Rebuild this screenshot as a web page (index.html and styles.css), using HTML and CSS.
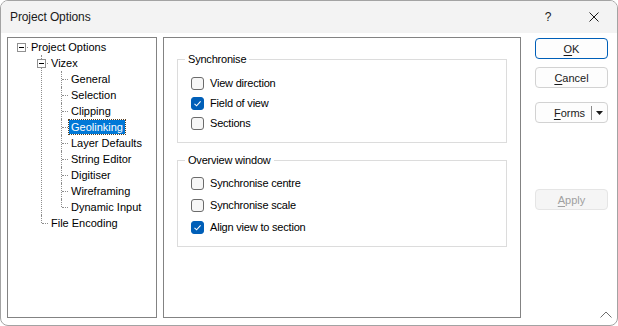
FILE: index.html
```html
<!DOCTYPE html>
<html lang="en">
<head>
  <meta charset="UTF-8">
  <title>Project Options</title>
  <link rel="stylesheet" href="styles.css">
</head>
<body>
  <div class="window">
    <div class="titlebar">
      <div class="title">Project Options</div>
      <div class="caption-btn">?</div>
      <div class="caption-btn">
        <svg width="10" height="10" viewBox="0 0 10 10"><path d="M0.5 0.5 L9.5 9.5 M9.5 0.5 L0.5 9.5" stroke="#1a1a1a" stroke-width="1" fill="none"/></svg>
      </div>
    </div>

    <div class="content">
      <div class="tree-panel">
        <ul class="tree">
          <li class="node">
            <div class="row"><span class="expander"></span><span class="label">Project Options</span></div>
            <ul class="branch">
              <li class="node">
                <div class="row"><span class="expander"></span><span class="label">Vizex</span></div>
                <ul class="branch">
                  <li class="node"><div class="row"><span class="label">General</span></div></li>
                  <li class="node"><div class="row"><span class="label">Selection</span></div></li>
                  <li class="node"><div class="row"><span class="label">Clipping</span></div></li>
                  <li class="node"><div class="row"><span class="label selected">Geolinking</span></div></li>
                  <li class="node"><div class="row"><span class="label">Layer Defaults</span></div></li>
                  <li class="node"><div class="row"><span class="label">String Editor</span></div></li>
                  <li class="node"><div class="row"><span class="label">Digitiser</span></div></li>
                  <li class="node"><div class="row"><span class="label">Wireframing</span></div></li>
                  <li class="node"><div class="row"><span class="label">Dynamic Input</span></div></li>
                </ul>
              </li>
              <li class="node"><div class="row"><span class="label">File Encoding</span></div></li>
            </ul>
          </li>
        </ul>
      </div>

      <div class="page-panel">
        <fieldset class="group group-sync">
          <legend>Synchronise</legend>
          <div class="rows">
            <div class="check"><span class="box"></span>View direction</div>
            <div class="check"><span class="box checked"><svg width="11" height="11" viewBox="0 0 11 11"><path d="M2.5 5.8 L4.6 7.8 L8.6 3.4" stroke="#fff" stroke-width="1.1" fill="none"/></svg></span>Field of view</div>
            <div class="check"><span class="box"></span>Sections</div>
          </div>
        </fieldset>

        <fieldset class="group group-overview">
          <legend>Overview window</legend>
          <div class="rows">
            <div class="check"><span class="box"></span>Synchronise centre</div>
            <div class="check"><span class="box"></span>Synchronise scale</div>
            <div class="check"><span class="box checked"><svg width="11" height="11" viewBox="0 0 11 11"><path d="M2.5 5.8 L4.6 7.8 L8.6 3.4" stroke="#fff" stroke-width="1.1" fill="none"/></svg></span>Align view to section</div>
          </div>
        </fieldset>
      </div>

      <div class="buttons">
        <div class="btn btn-default btn-ok"><u>O</u>K</div>
        <div class="btn btn-cancel"><u>C</u>ancel</div>
        <div class="btn btn-split btn-forms">
          <span class="split-label"><u>F</u>orms</span>
          <span class="split-arrow">
            <svg width="7" height="4" viewBox="0 0 7 4"><path d="M0 0 H7 L3.5 4 Z" fill="#1a1a1a"/></svg>
          </span>
        </div>
        <div class="btn btn-disabled btn-apply"><u>A</u>pply</div>
      </div>
    </div>

    <svg class="grip" width="12" height="7" viewBox="0 0 12 7"><path d="M0.5 6.5 L6 1 L11.5 6.5" stroke="#6e6e6e" stroke-width="1" fill="none"/></svg>
  </div>
</body>
</html>
```

FILE: styles.css
```css
* {
  margin: 0;
  padding: 0;
  box-sizing: border-box;
}

body {
  width: 618px;
  height: 326px;
  overflow: hidden;
  background-color: #ffffff;
  font-family: 'Liberation Sans', Arial, sans-serif;
  font-size: 11px;
  color: #000;
}

.window {
  position: relative;
  width: 618px;
  height: 326px;
  border: 1px solid #a3a3a3;
  border-radius: 8px;
  background-color: #ffffff;
  display: flex;
  flex-direction: column;
  overflow: hidden;
}

/* title bar */

.titlebar {
  height: 32px;
  background-color: #f3f3f3;
  display: flex;
  align-items: center;
  padding-left: 9px;
}

.title {
  flex-grow: 1;
  font-size: 12px;
  letter-spacing: -0.1px;
  color: #1a1a1a;
}

.caption-btn {
  width: 46px;
  height: 32px;
  display: flex;
  justify-content: center;
  align-items: center;
  font-size: 12px;
  color: #1a1a1a;
}

/* body */

.content {
  flex-grow: 1;
  display: flex;
  padding: 4px 9px 7px 6px;
}

.tree-panel {
  width: 150px;
  border: 1px solid #838383;
  background-color: #fff;
  padding-top: 1px;
}

.tree {
  list-style: none;
  padding-left: 13px;
}

.branch {
  list-style: none;
  margin-left: 12px;
}

.node {
  position: relative;
  padding-left: 8px;
}

.node::after {
  content: "";
  position: absolute;
  left: 1px;
  top: 8px;
  width: 6px;
  border-top: 1px dotted #8e8e8e;
}

.branch .node::before {
  content: "";
  position: absolute;
  left: 0;
  top: 0;
  bottom: 0;
  border-left: 1px dotted #8e8e8e;
}

.branch .node:last-child::before {
  bottom: auto;
  height: 8px;
}

.row {
  height: 16px;
  display: flex;
  align-items: center;
}

.expander {
  position: absolute;
  left: -4px;
  top: 4px;
  width: 9px;
  height: 9px;
  border: 1px solid #919191;
  background-color: #fff;
  z-index: 1;
}

.expander::after {
  content: "";
  position: absolute;
  left: 1px;
  top: 3px;
  width: 5px;
  height: 1px;
  background-color: #000;
}

.label {
  height: 14px;
  line-height: 14px;
  padding: 0 2px;
  white-space: nowrap;
}

.label.selected {
  background-color: #0078d7;
  color: #fff;
  outline: 1px dotted #5a4020;
}

/* property page */

.page-panel {
  width: 358px;
  margin-left: 6px;
  border: 1px solid #838383;
  padding: 14px 13px 0 13px;
}

.group {
  border: 1px solid #dcdcdc;
  padding: 0 10px 9px 7px;
}

.group legend {
  padding: 0 3px;
  line-height: 14px;
  letter-spacing: -0.2px;
}

.group-overview {
  margin-top: 10px;
  padding-bottom: 8px;
}

.rows {
  padding-left: 6px;
  padding-top: 7px;
}

.group-overview .rows {
  padding-top: 5px;
}

.check {
  height: 20px;
  display: flex;
  align-items: center;
  letter-spacing: -0.2px;
}

.group-overview .check {
  height: 22px;
}

.box {
  width: 13px;
  height: 13px;
  margin-right: 6px;
  border: 1px solid #6b6b6b;
  border-radius: 3px;
  background-color: #f6f6f6;
  display: flex;
  justify-content: center;
  align-items: center;
}

.box.checked {
  background-color: #005fb8;
  border-color: #005fb8;
}

/* buttons */

.buttons {
  width: 73px;
  margin-left: 14px;
  display: flex;
  flex-direction: column;
}

.btn {
  height: 21px;
  border: 1px solid #d2d2d2;
  border-radius: 4px;
  background-color: #fdfdfd;
  display: flex;
  justify-content: center;
  align-items: center;
  color: #1a1a1a;
}

.btn u {
  text-decoration-thickness: 1px;
  text-underline-offset: 2px;
}

.btn-default {
  border-color: #005fb8;
}

.btn-ok {
  margin-top: 1px;
}

.btn-cancel {
  margin-top: 8px;
}

.btn-forms {
  margin-top: 14px;
}

.btn-split {
  justify-content: flex-start;
}

.split-label {
  flex-grow: 1;
  text-align: center;
  padding-left: 12px;
}

.split-arrow {
  width: 16px;
  height: 14px;
  border-left: 1px solid #8a8a8a;
  display: flex;
  justify-content: center;
  align-items: center;
}

.btn-apply {
  margin-top: 66px;
}

.btn-disabled {
  background-color: #f5f5f5;
  border-color: #e5e5e5;
  color: #a0a0a0;
}

.grip {
  position: absolute;
  right: 5px;
  bottom: 7px;
}
```
